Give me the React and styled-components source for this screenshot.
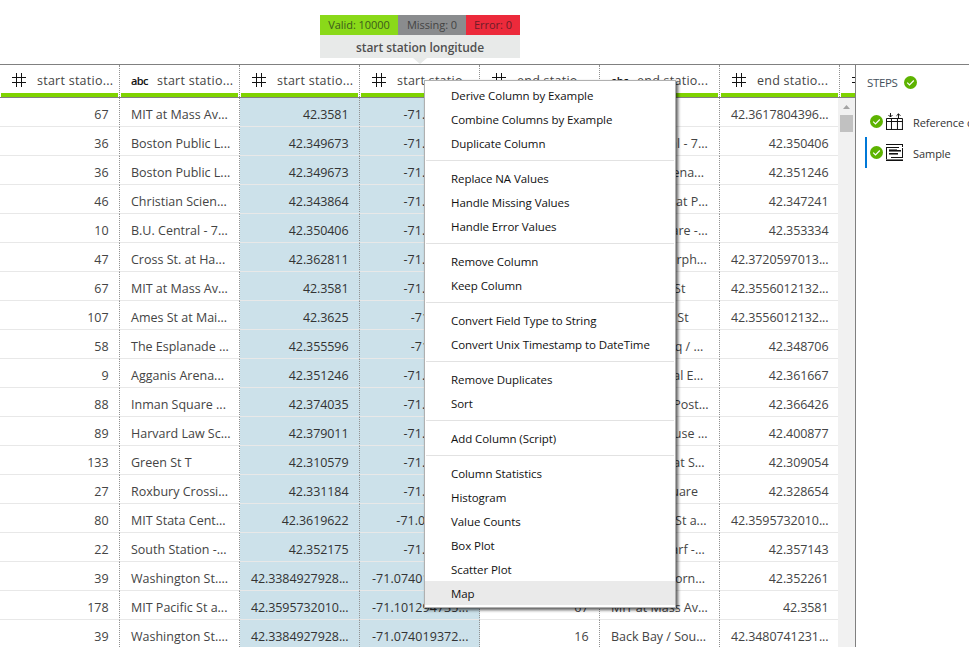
import React from "react";
import styled, { createGlobalStyle, css } from "styled-components";

const GlobalStyle = createGlobalStyle`
  * { box-sizing: border-box; }
  html, body { margin: 0; padding: 0; background: #fff; overflow: hidden; }
  body { font-family: "Open Sans", "Noto Sans", sans-serif; color: #444; }
`;

const Page = styled.div`
  width: 969px;
  height: 647px;
  display: flex;
  flex-direction: column;
  overflow: hidden;
`;

const Summary = styled.div`
  height: 64px;
  padding: 15px 0 0 320px;
  display: flex;
  flex: none;
`;

const Tooltip = styled.div`
  width: 200px;
  display: flex;
  flex-direction: column;
  align-items: center;
`;

const Badges = styled.div`
  display: flex;
  width: 100%;
  height: 20px;
`;

const Badge = styled.div`
  width: ${(p) => p.$width}px;
  background: ${(p) => p.$color};
  color: ${(p) => p.$ink};
  font-size: 11px;
  line-height: 20px;
  text-align: center;
  letter-spacing: -0.05px;
  white-space: nowrap;
`;

const TooltipTitle = styled.div`
  width: 100%;
  height: 23px;
  background: #e8eae9;
  color: #505050;
  font-size: 12px;
  font-weight: 600;
  line-height: 25px;
  letter-spacing: -0.05px;
  text-align: center;
`;

const Pointer = styled.div`
  width: 0;
  border: 7px solid transparent;
  border-top: 6px solid #e8eae9;
  border-bottom: 0;
`;

const Main = styled.div`
  flex: 1;
  min-height: 0;
  display: flex;
  border-top: 1px solid #808080;
`;

const Grid = styled.div`
  width: 855px;
  flex: none;
  display: flex;
  flex-direction: column;
  overflow: hidden;
`;

const HeaderRow = styled.div`
  display: flex;
  height: 33px;
  flex: none;
  border-bottom: 1px solid #808080;
  overflow: hidden;
`;

const HeaderCell = styled.div`
  width: 120px;
  flex: none;
  display: flex;
  flex-direction: column;
  border-right: 1px dotted #909090;
`;

const HeaderLabel = styled.div`
  height: 28px;
  padding: 2px 0 0 11px;
  display: flex;
  align-items: center;
  font-size: 12.5px;
  letter-spacing: 0.25px;
  white-space: nowrap;
  color: #444;
`;

const TypeIcon = styled.span`
  width: 26px;
  flex: none;
  display: flex;
  align-items: center;
  color: #111;
  font-size: 11px;
  font-weight: 600;
  letter-spacing: -0.6px;
`;

const QualityBar = styled.div`
  height: 4px;
  margin: 0 1px;
  background: #7fd300;
`;

const Body = styled.div`
  flex: 1;
  min-height: 0;
  display: flex;
`;

const Rows = styled.div`
  width: 838px;
  flex: none;
  overflow: hidden;
`;

const Row = styled.div`
  display: flex;
  height: 29px;
`;

const Cell = styled.div`
  width: 120px;
  flex: none;
  height: 29px;
  padding: 3px 11px 0 11px;
  border-right: 1px dotted #909090;
  border-bottom: 1px solid #e8e8e8;
  font-size: 12.5px;
  line-height: 27px;
  white-space: nowrap;
  text-align: left;
  ${(p) =>
    p.$numeric &&
    css`
      display: flex;
      justify-content: flex-end;
      padding-right: 10.5px;
      letter-spacing: ${p.$signed ? 0.05 : -0.08}px;
    `}
  ${(p) =>
    p.$selected &&
    css`
      background: #cce1ea;
      color: #333;
    `}
`;

const Scrollbar = styled.div`
  width: 17px;
  background: #f1f1f1;
  display: flex;
  flex-direction: column;
  align-items: center;
`;

const ScrollArrow = styled.div`
  height: 17px;
  display: flex;
  align-items: center;
`;

const ScrollThumb = styled.div`
  width: 13px;
  height: 17px;
  background: #c1c1c1;
`;

const Steps = styled.aside`
  flex: 1;
  min-width: 0;
  border-left: 1px solid #808080;
  padding-left: 9px;
  overflow: hidden;
`;

const StepsTitle = styled.div`
  height: 41px;
  padding: 0 0 6px 2px;
  display: flex;
  align-items: center;
  gap: 6px;
  font-size: 11.5px;
  line-height: 16px;
  letter-spacing: -0.35px;
  color: #44505c;
`;

const Step = styled.div`
  height: 31px;
  width: 140px;
  display: flex;
  align-items: center;
  border-left: 2px solid ${(p) => (p.$active ? "#0078d7" : "transparent")};
  padding-left: 3px;
  gap: 3px;
  white-space: nowrap;
`;

const StepName = styled.span`
  padding: 1px 0 0 7px;
  font-size: 11px;
  letter-spacing: -0.05px;
  color: #333;
`;

const Menu = styled.div`
  position: absolute;
  left: 424px;
  top: 80px;
  width: 252px;
  height: 528px;
  padding: 2px 1px;
  background: #fff;
  border: 1px solid #b0b0b0;
  box-shadow: 2px 2px 3px rgba(0, 0, 0, 0.65);
  color: #111;
`;

const MenuItem = styled.div`
  height: 24px;
  margin: 0 -1px;
  padding: 1px 0 0 26px;
  font-size: 11.5px;
  line-height: 24px;
  letter-spacing: -0.07px;
  white-space: nowrap;
  background: ${(p) => (p.$active ? "#eaeaea" : "transparent")};
`;

const Separator = styled.div`
  height: 1px;
  margin: 5px 0;
  background: #e2e2e2;
`;

const HashIcon = () => (
  <svg width="15" height="16" viewBox="0 0 15 16" shapeRendering="crispEdges">
    <path d="M5.500 1v14M10.500 1v14M1 5.500h14M1 10.500h14" stroke="#111" fill="none" />
  </svg>
);

const CheckIcon = () => (
  <svg width="13" height="13" viewBox="0 0 13 13">
    <circle cx="6.5" cy="6.5" r="6.5" fill="#5db300" />
    <path d="M3.2 6.6l2.3 2.3 4.3-4.4" stroke="#fff" strokeWidth="1.2" fill="none" />
  </svg>
);

const ReferenceIcon = () => (
  <svg width="17" height="17" viewBox="0 0 17 17" fill="none" stroke="#111">
    <path d="M.5 17V5.500h16V17M0 8.500h17M5.500 6v11M11.500 6v11M0 16.500h17" />
    <path d="M4.500 0v4M2.500 2l2 2 2-2M12.500 5V.8M10.500 2.800l2-2 2 2" />
  </svg>
);

const SampleIcon = () => (
  <svg width="17" height="17" viewBox="0 0 17 17" fill="none" stroke="#111" shapeRendering="crispEdges">
    <path d="M0 .5h17M16.500 0v3M0 3.500h13M.5 3v11M3 6.500h12M3 9.500h9M16.500 4v9M5 13.500h12M0 16.500h17M.5 14v3" />
    <path d="M3 7.500h12M3 10.500h9M3 5.500h8M0 15.500h17" stroke="#777" />
  </svg>
);

const ArrowUp = () => (
  <svg width="7" height="4" viewBox="0 0 7 4">
    <path d="M0 4L3.500 0 7 4z" fill="#a3a3a3" />
  </svg>
);

const columns = [
  { type: "number", label: "start statio..." },
  { type: "text", label: "start statio..." },
  { type: "number", label: "start statio..." },
  { type: "number", label: "start statio..." },
  { type: "number", label: "end statio..." },
  { type: "text", label: "end statio..." },
  { type: "number", label: "end statio..." },
  { type: "number", label: "" },
];

const rows = [
  ["67", "MIT at Mass Av...", "42.3581", "-71.093198", "41", "Ames St", "42.3617804396..."],
  ["36", "Boston Public L...", "42.349673", "-71.077303", "10", "B.U. Central - 7...", "42.350406"],
  ["36", "Boston Public L...", "42.349673", "-71.077303", "9", "Agganis Arena...", "42.351246"],
  ["46", "Christian Scien...", "42.343864", "-71.085918", "53", "Harvard St at P...", "42.347241"],
  ["10", "B.U. Central - 7...", "42.350406", "-71.108279", "88", "Union Square -...", "42.353334"],
  ["47", "Cross St. at Ha...", "42.362811", "-71.056067", "74", "Kendall Murph...", "42.3720597013..."],
  ["67", "MIT at Mass Av...", "42.3581", "-71.093198", "22", "Park Plaza  St", "42.3556012132..."],
  ["107", "Ames St at Mai...", "42.3625", "-71.08822", "22", "Park Plaza, St", "42.3556012132..."],
  ["58", "The Esplanade ...", "42.355596", "-71.07278", "36", "Kenmore Sq / ...", "42.348706"],
  ["9", "Agganis Arena...", "42.351246", "-71.115639", "75", "Memorial, al E...", "42.361667"],
  ["88", "Inman Square ...", "42.374035", "-71.101427", "80", "Boston, at Post...", "42.366426"],
  ["89", "Harvard Law Sc...", "42.379011", "-71.119945", "91", "One Carhouse ...", "42.400877"],
  ["133", "Green St T", "42.310579", "-71.107341", "67", "Columbus at S...", "42.309054"],
  ["27", "Roxbury Crossi...", "42.331184", "-71.095171", "11", "Nubian Square", "42.328654"],
  ["80", "MIT Stata Cent...", "42.3619622", "-71.0920526", "67", "Longwood St a...", "42.3595732010..."],
  ["22", "South Station -...", "42.352175", "-71.055547", "24", "Rowes Wharf -...", "42.357143"],
  ["39", "Washington St....", "42.3384927928...", "-71.074019372...", "42", "Fairmont Corn...", "42.352261"],
  ["178", "MIT Pacific St a...", "42.3595732010...", "-71.101294735...", "67", "MIT at Mass Av...", "42.3581"],
  ["39", "Washington St....", "42.3384927928...", "-71.074019372...", "16", "Back Bay / Sou...", "42.3480741231..."],
];

const menuGroups = [
  ["Derive Column by Example", "Combine Columns by Example", "Duplicate Column"],
  ["Replace NA Values", "Handle Missing Values", "Handle Error Values"],
  ["Remove Column", "Keep Column"],
  ["Convert Field Type to String", "Convert Unix Timestamp to DateTime"],
  ["Remove Duplicates", "Sort"],
  ["Add Column (Script)"],
  ["Column Statistics", "Histogram", "Value Counts", "Box Plot", "Scatter Plot", "Map"],
];

export default function App() {
  return (
    <>
      <GlobalStyle />
      <Page>
        <Summary>
          <Tooltip>
            <Badges>
              <Badge $width={78} $color="#8ad919" $ink="#3c5a1c">Valid: 10000</Badge>
              <Badge $width={68} $color="#8a8c8e" $ink="#444">Missing: 0</Badge>
              <Badge $width={54} $color="#ec2a3b" $ink="#6e1c28">Error: 0</Badge>
            </Badges>
            <TooltipTitle>start station longitude</TooltipTitle>
            <Pointer />
          </Tooltip>
        </Summary>
        <Main>
          <Grid>
            <HeaderRow>
              {columns.map((column, i) => (
                <HeaderCell key={i}>
                  <HeaderLabel>
                    <TypeIcon>{column.type === "number" ? <HashIcon /> : "abc"}</TypeIcon>
                    {column.label}
                  </HeaderLabel>
                  <QualityBar />
                </HeaderCell>
              ))}
            </HeaderRow>
            <Body>
              <Rows>
                {rows.map((row, r) => (
                  <Row key={r}>
                    {row.map((value, c) => (
                      <Cell
                        key={c}
                        $numeric={columns[c].type === "number"}
                        $signed={value.startsWith("-")}
                        $selected={c === 2 || c === 3}
                      >
                        {value}
                      </Cell>
                    ))}
                  </Row>
                ))}
              </Rows>
              <Scrollbar>
                <ScrollArrow><ArrowUp /></ScrollArrow>
                <ScrollThumb />
              </Scrollbar>
            </Body>
          </Grid>
          <Steps>
            <StepsTitle>STEPS <CheckIcon /></StepsTitle>
            <Step><CheckIcon /><ReferenceIcon /><StepName>Reference column</StepName></Step>
            <Step $active><CheckIcon /><SampleIcon /><StepName>Sample</StepName></Step>
          </Steps>
        </Main>
        <Menu>
          {menuGroups.map((group, g) => (
            <React.Fragment key={g}>
              {g > 0 && <Separator />}
              {group.map((item) => (
                <MenuItem key={item} $active={item === "Map"}>{item}</MenuItem>
              ))}
            </React.Fragment>
          ))}
        </Menu>
      </Page>
    </>
  );
}
